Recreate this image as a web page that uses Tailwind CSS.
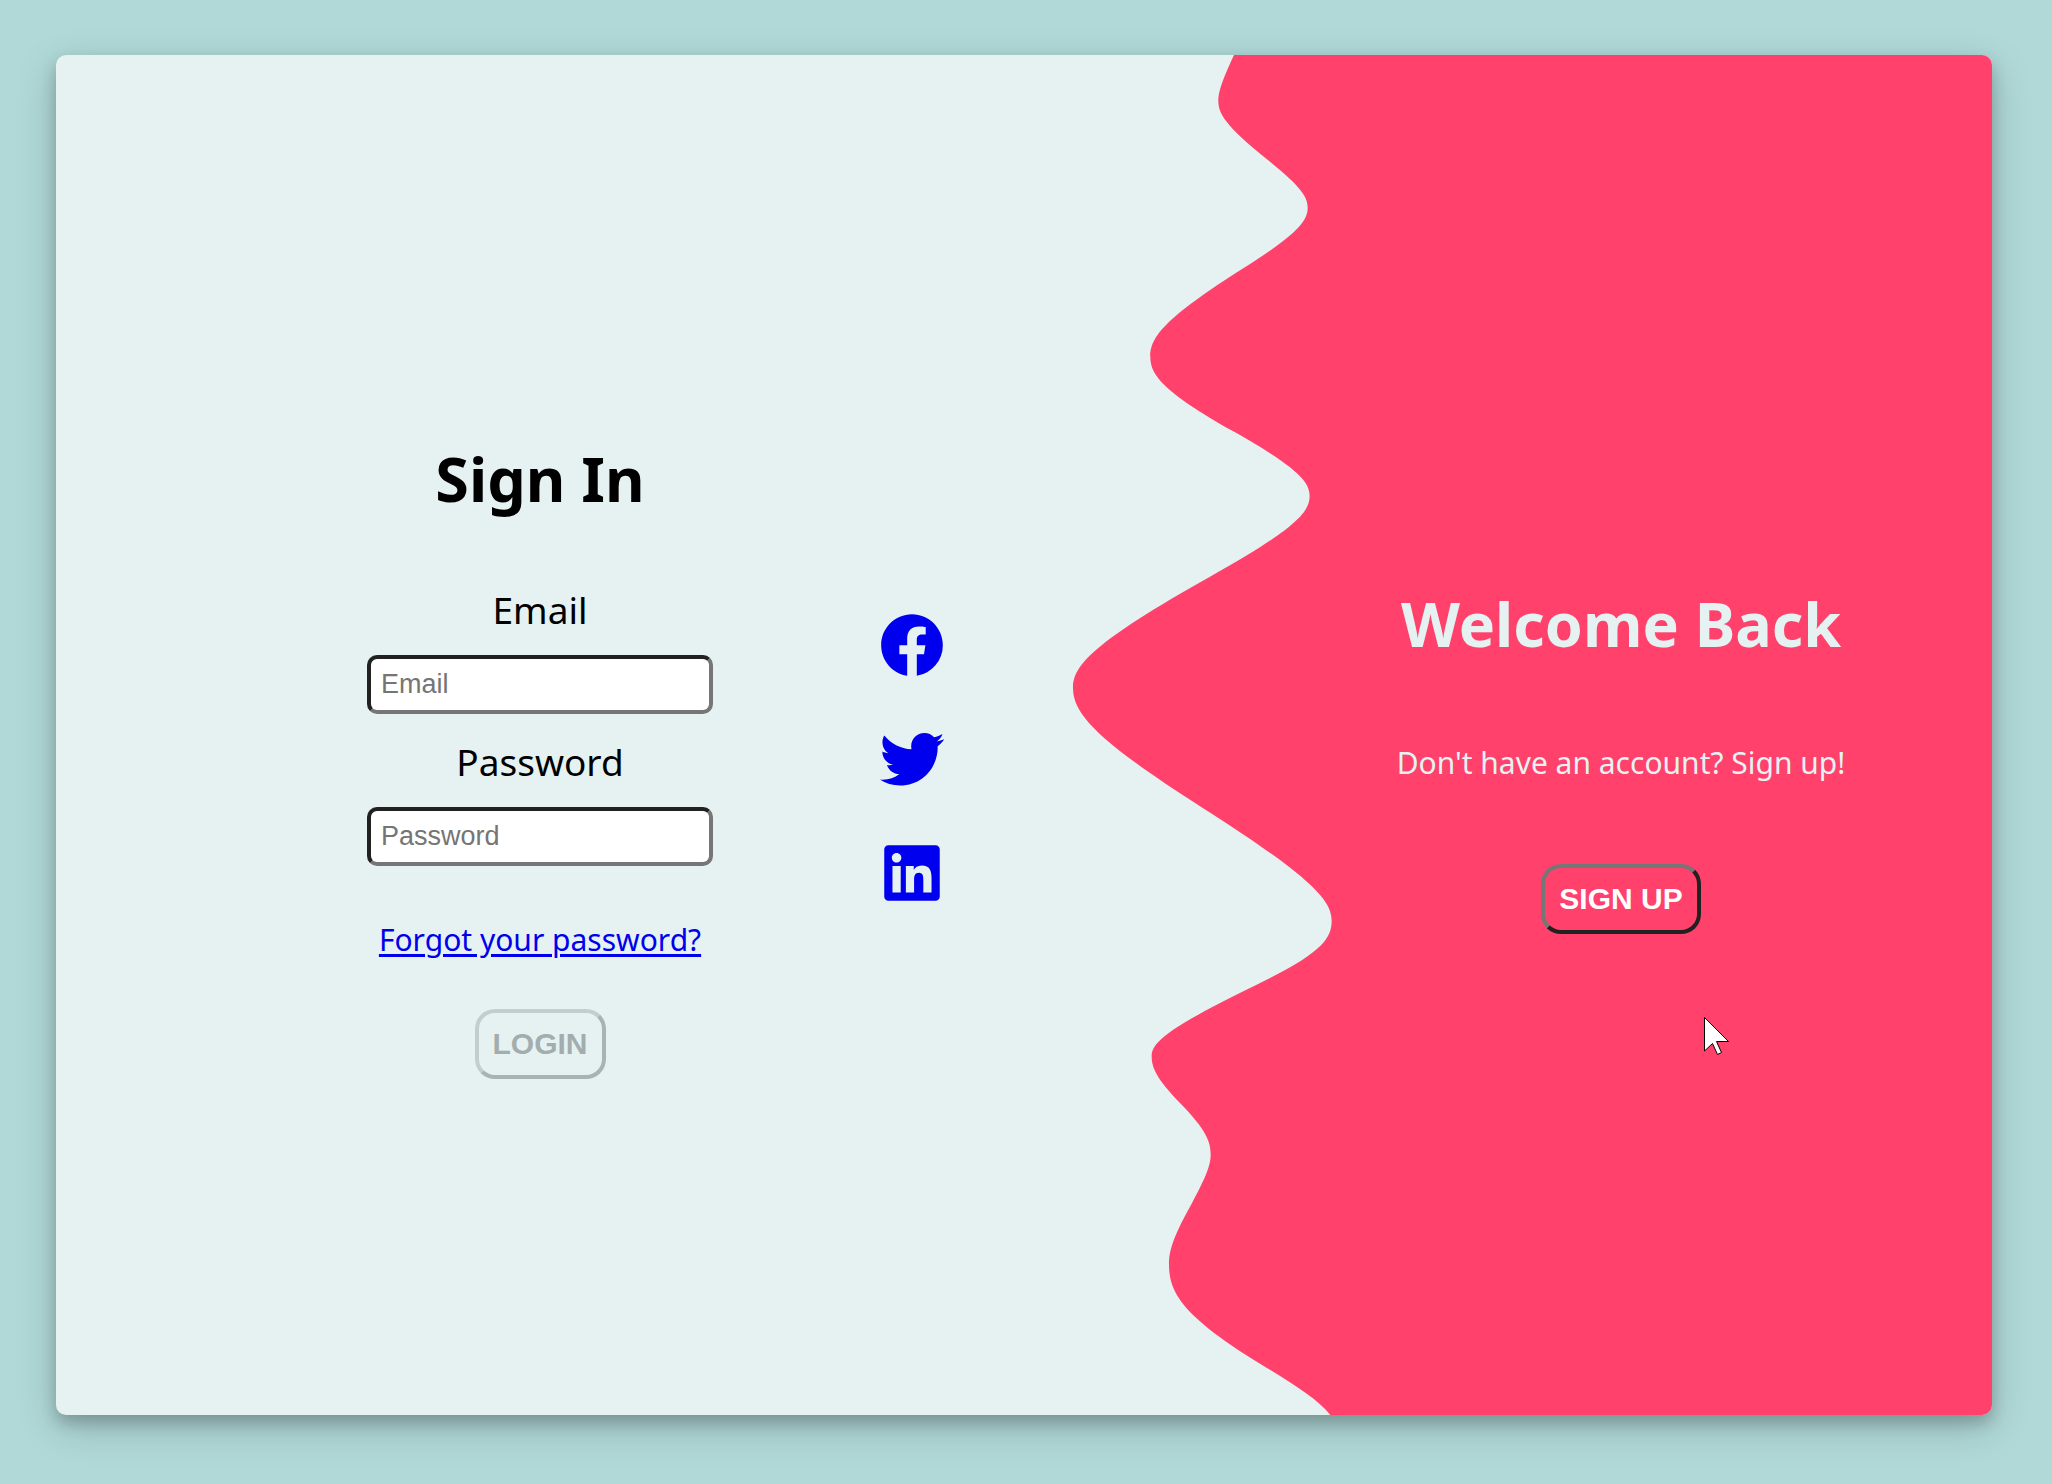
<!DOCTYPE html>
<html lang="en">
<head>
<meta charset="utf-8">
<meta name="viewport" content="width=device-width, initial-scale=1">
<title>Sign In</title>
<script src="https://cdn.jsdelivr.net/npm/@tailwindcss/browser@4"></script>
</head>
<body class="flex min-h-screen bg-[#b0d9d8] pt-[55px] pr-[60px] pb-[69px] pl-[56px] font-['Segoe_UI','Noto_Sans',sans-serif] text-black">
  <main class="relative grid flex-1 grid-cols-[242fr_484fr_260fr_208fr_742fr] items-center overflow-hidden rounded-[10px] bg-[#e5f2f1] shadow-[0_8px_16px_rgba(0,0,0,0.2),0_12px_40px_rgba(0,0,0,0.19)]">
    <!-- Wavy divider -->
    <svg class="absolute inset-0 h-full w-full" viewBox="0 0 5808 4080" preserveAspectRatio="none" aria-hidden="true">
      <path fill="#ff416c" d="M3534 0C3496 81 3487 113 3487 138C3487 176 3509 213 3632 312C3737 395 3755 427 3755 458C3755 497 3726 536 3562 640C3325 790 3283 847 3283 905C3283 959 3320 1009 3532 1129C3727 1239 3761 1281 3761 1323C3761 1372 3716 1423 3462 1565C3113 1761 3051 1831 3051 1898C3051 1971 3109 2048 3439 2258C3769 2468 3827 2537 3827 2597C3827 2653 3793 2696 3602 2789C3334 2919 3287 2963 3287 3003C3287 3037 3300 3069 3372 3144C3450 3224 3464 3259 3464 3298C3464 3327 3455 3358 3407 3446C3349 3550 3339 3589 3339 3628C3339 3713 3380 3783 3612 3926C3712 3988 3782 4030 3823 4080H5808V0Z"/>
    </svg>

    <form class="relative col-start-2 flex flex-col items-center pt-[43px]">
      <h1 class="mb-[59px] text-[61px] leading-[90px] font-bold">Sign In</h1>
      <label for="email" class="mb-[18px] text-[37px] leading-[54px]">Email</label>
      <input id="email" type="email" placeholder="Email" class="mb-[21px] h-[59px] w-[346px] rounded-[10px] border-4 border-t-[#212121] border-r-[#767676] border-b-[#767676] border-l-[#212121] bg-white px-[10px] font-['Liberation_Sans',sans-serif] text-[27px] placeholder:text-[#757575]">
      <label for="password" class="mb-[18px] text-[37px] leading-[54px]">Password</label>
      <input id="password" type="password" placeholder="Password" class="mb-[52px] h-[59px] w-[346px] rounded-[10px] border-4 border-t-[#212121] border-r-[#767676] border-b-[#767676] border-l-[#212121] bg-white px-[10px] font-['Liberation_Sans',sans-serif] text-[27px] placeholder:text-[#757575]">
      <a href="#" class="mb-[47px] text-[30px] leading-[44px] whitespace-nowrap text-[#0000ee] underline decoration-[3px] underline-offset-[3px]">Forgot your password?</a>
      <button type="submit" disabled class="h-[70px] rounded-[20px] border-4 border-t-[#c4cdcd] border-r-[#aab3b3] border-b-[#aab3b3] border-l-[#c4cdcd] px-[14px] pb-[2px] font-['Liberation_Sans',sans-serif] text-[30px] font-bold text-[#a3adad]">LOGIN</button>
    </form>

    <nav aria-label="Social sign in" class="relative col-start-3 mt-12 flex flex-col items-center gap-10 text-[#0000ee]">
      <a href="#" aria-label="Facebook">
        <svg class="size-[74px]" viewBox="0 0 24 24" fill="currentColor"><path d="M12 2.04C6.5 2.04 2 6.53 2 12.06C2 17.06 5.66 21.21 10.44 21.96V14.96H7.9V12.06H10.44V9.85C10.44 7.34 11.93 5.96 14.22 5.96C15.31 5.96 16.45 6.15 16.45 6.15V8.62H15.19C13.95 8.62 13.56 9.39 13.56 10.16V12.06H16.34L15.89 14.96H13.56V21.96A10 10 0 0 0 22 12.06C22 6.53 17.5 2.04 12 2.04Z"/></svg>
      </a>
      <a href="#" aria-label="Twitter">
        <svg class="size-[74px]" viewBox="0 0.4 24 24" fill="currentColor"><path d="M22.46 6C21.69 6.35 20.86 6.58 20 6.69C20.88 6.16 21.56 5.32 21.88 4.31C21.05 4.81 20.13 5.16 19.16 5.36C18.37 4.5 17.26 4 16 4C13.65 4 11.73 5.92 11.73 8.29C11.73 8.63 11.77 8.96 11.84 9.27C8.28 9.09 5.11 7.38 3 4.79C2.63 5.42 2.42 6.16 2.42 6.94C2.42 8.43 3.17 9.75 4.33 10.5C3.62 10.5 2.96 10.3 2.38 10V10.03C2.38 12.11 3.86 13.85 5.82 14.24C5.46 14.34 5.08 14.39 4.69 14.39C4.42 14.39 4.15 14.36 3.89 14.31C4.43 16 6 17.26 7.89 17.29C6.43 18.45 4.58 19.13 2.56 19.13C2.22 19.13 1.88 19.11 1.54 19.07C3.44 20.29 5.7 21 8.12 21C16 21 20.33 14.46 20.33 8.79C20.33 8.6 20.33 8.42 20.32 8.23C21.16 7.63 21.88 6.87 22.46 6Z"/></svg>
      </a>
      <a href="#" aria-label="LinkedIn">
        <svg class="size-[74px]" viewBox="-4 -4 32 32" fill="currentColor"><path d="M20.447 20.452h-3.554v-5.569c0-1.328-.027-3.037-1.852-3.037-1.853 0-2.136 1.445-2.136 2.939v5.667H9.351V9h3.414v1.561h.046c.477-.9 1.637-1.85 3.37-1.85 3.601 0 4.267 2.37 4.267 5.455v6.286zM5.337 7.433c-1.144 0-2.063-.926-2.063-2.065 0-1.138.92-2.063 2.063-2.063 1.14 0 2.064.925 2.064 2.063 0 1.139-.925 2.065-2.064 2.065zm1.782 13.019H3.555V9h3.564v11.452zM22.225 0H1.771C.792 0 0 .774 0 1.729v20.542C0 23.227.792 24 1.771 24h20.451C23.2 24 24 23.227 24 22.271V1.729C24 .774 23.2 0 22.222 0h.003z"/></svg>
      </a>
    </nav>

    <section class="relative col-start-5 flex flex-col items-center pt-[43px] text-[#e5f2f1]">
      <h2 class="mb-[72px] text-[61px] leading-[90px] font-bold whitespace-nowrap">Welcome Back</h2>
      <p class="mb-[79px] text-[30px] leading-[44px] whitespace-nowrap">Don't have an account? Sign up!</p>
      <button type="button" class="h-[70px] rounded-[20px] border-4 border-t-[#767676] border-r-[#212121] border-b-[#212121] border-l-[#767676] px-[14px] pb-[2px] font-['Liberation_Sans',sans-serif] text-[30px] font-bold text-white">SIGN UP</button>
    </section>

    <!-- Pointer -->
    <svg class="absolute top-[961px] left-[1647px] h-[40px] w-[28px]" viewBox="0 0 28 40" aria-hidden="true">
      <path fill="#fff" stroke="#000" d="M1.500 1.500V35L9.500 27.500L14.500 38.500L18.500 36.500L13.500 25.500H25.500Z"/>
    </svg>
  </main>
</body>
</html>
